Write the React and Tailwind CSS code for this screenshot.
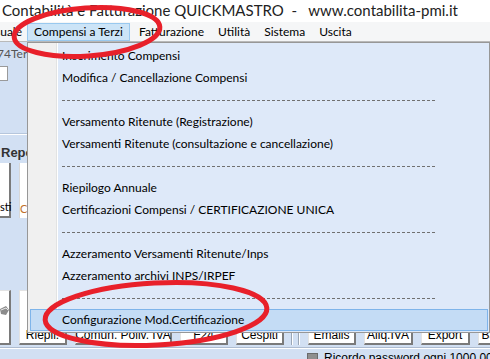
import React from 'react';

// Dropdown entries of the "Compensi a Terzi" menu; null marks a dashed divider row
const items = [
  'Inserimento Compensi',
  'Modifica / Cancellazione Compensi',
  null,
  'Versamento Ritenute (Registrazione)',
  'Versamenti Ritenute (consultazione e cancellazione)',
  null,
  'Riepilogo Annuale',
  'Certificazioni Compensi / CERTIFICAZIONE UNICA',
  null,
  'Azzeramento Versamenti Ritenute/Inps',
  'Azzeramento archivi INPS/IRPEF',
  null,
];

const menus = ['Fatturazione', 'Utilità', 'Sistema', 'Uscita'];

function ToolButton({ label, width = 'w-[48px]' }) {
  return (
    <div
      className={`${width} h-[55px] shrink-0 flex items-end justify-center pb-[1px] bg-white border-t border-l border-[#e3e3e3] border-r-2 border-b-2 border-r-[#7a7a7a] border-b-[#7a7a7a] text-[12px] leading-[13px] text-black whitespace-nowrap`}
    >
      {label}
    </div>
  );
}

export default function App() {
  return (
    <div className="relative w-[490px] h-[359px] overflow-hidden flex flex-col bg-[#d2e0f3] font-['Lato','Noto_Sans',sans-serif]">
      {/* Window title */}
      <div className="h-[22px] shrink-0 bg-white pl-[2px] text-[15px] leading-[20px] text-[#222] whitespace-pre">
        Contabilità e Fatturazione QUICKMASTRO  -   www.contabilita-pmi.it
      </div>

      {/* Menu bar */}
      <div className="h-[20px] shrink-0 flex items-center bg-[#f5f6f7] border-b border-[#b9b9b9] text-[12px] text-black">
        <span className="ml-[-5px] w-[32px] shrink-0">suale</span>
        <span className="h-[18px] w-[103px] shrink-0 flex items-center justify-center bg-[#cce4f7] border border-[#99c9ef]">
          Compensi a Terzi
        </span>
        <div className="flex gap-[14px] ml-[9px]">
          {menus.map((m) => (
            <span key={m}>{m}</span>
          ))}
        </div>
      </div>

      {/* Application window behind the popup */}
      <div className="flex-1 min-h-0 flex flex-col">
        <div className="h-[248px] shrink-0 w-[27px] flex flex-col text-[12px]">
          <span className="ml-[-3px] mt-[5px] leading-[14px] text-[#555]">74Ter</span>
          <div className="mt-[5px] w-[8px] h-[15px] bg-white border border-[#9a9a9a] border-l-0" />
          <div className="mt-[52px] h-[2px] border-t border-[#b6c6dc] border-b border-b-white" />
          <span className="mt-[11px] ml-[1px] font-bold text-[13px] leading-[14px] text-[#333] font-['Liberation_Sans',sans-serif]">
            Repo
          </span>
          <div className="mt-[3px] flex gap-[8px]">
            <div className="w-[11px] h-[55px] flex items-end bg-white border-r-2 border-b-2 border-[#7a7a7a] text-[11px] leading-[14px] pb-[2px]">
              sti
            </div>
            <div className="w-[10px] h-[55px] flex items-end bg-white border-l border-[#d8d8d8] text-[11px] leading-[14px] pb-[2px] text-[#c0702a]">
              C
            </div>
          </div>
        </div>

        {/* Big toolbar buttons */}
        <div className="h-[55px] shrink-0 flex font-['Liberation_Sans',sans-serif]">
          <div className="ml-[-37px] flex gap-[8px]">
            <div className="relative">
              <ToolButton label="m." />
              <svg className="absolute left-[37px] top-[16px]" width="9" height="10" viewBox="0 0 9 10">
                <path d="M0 3 L6 0 L9 4 L6 9 L1 8 Z" fill="#8c8c8c" />
                <path d="M1 4 L6 2 L8 4" stroke="#e6e6e6" fill="none" />
              </svg>
            </div>
            <ToolButton label="Riepil." />
            <ToolButton label="Comun. Poliv. IVA" width="w-[97px]" />
            <ToolButton label="F24" />
            <ToolButton label="Cespiti" />
          </div>
          <div className="ml-[7px] w-[2px] border-l border-[#9aa6b6] border-r border-r-white" />
          <div className="ml-[5px] w-[2px] border-l border-[#9aa6b6] border-r border-r-white" />
          <div className="ml-[8px] flex gap-[8px]">
            <ToolButton label="Emails" />
            <ToolButton label="Aliq.IVA" width="w-[49px]" />
            <ToolButton label="Export" width="w-[49px]" />
            <ToolButton label="Backup" />
          </div>
        </div>

        <div className="mt-[2px] h-[2px] shrink-0 border-t border-[#aebcd0] border-b border-b-white" />
        <div className="flex items-center pl-[307px] pt-[2px] gap-[6px] text-[12px] leading-[14px] font-['Liberation_Sans',sans-serif]">
          <span className="w-[11px] h-[11px] shrink-0 bg-[#8f8f8f] border border-[#6b6b6b]" />
          <span className="whitespace-nowrap">Ricordo password ogni 1000 000</span>
        </div>
      </div>

      {/* Open dropdown menu */}
      <div className="absolute left-[27px] top-[42px] w-[463px] h-[291px] flex bg-[#dee9f9] border border-[#979797] text-[12px] text-black">
        <div className="w-[29px] shrink-0 bg-[#f0f0f0] border-r border-[#e2e3e3]" />
        <div className="w-px shrink-0 bg-white" />
        <div className="relative flex-1 flex flex-col pt-[2px]">
          {items.map((label, i) =>
            label ? (
              <div key={i} className="h-[22px] flex items-center pl-[4px] whitespace-nowrap">
                {label}
              </div>
            ) : (
              <div key={i} className="h-[22px] flex items-center pl-[4px]">
                <div className="w-[374px] h-px bg-[repeating-linear-gradient(90deg,#707070_0_3px,transparent_3px_5px)]" />
              </div>
            )
          )}
        </div>
      </div>
      {/* Highlighted last entry spans the gutter too */}
      <div className="absolute left-[30px] top-[309px] w-[458px] h-[22px] flex items-center pl-[31px] bg-[#c4dcf5] border border-[#7eb4ea] text-[12px] text-black">
        Configurazione Mod.Certificazione
      </div>

      {/* Red annotation ellipses */}
      <svg className="absolute inset-0 pointer-events-none" width="490" height="359" viewBox="0 0 490 359">
        <ellipse cx="87" cy="32" rx="73" ry="24" transform="rotate(-4 87 32)" fill="none" stroke="#e8202a" strokeWidth="5" />
        <ellipse cx="156" cy="314" rx="111" ry="31" transform="rotate(-3 156 314)" fill="none" stroke="#e8202a" strokeWidth="5" />
      </svg>
    </div>
  );
}
